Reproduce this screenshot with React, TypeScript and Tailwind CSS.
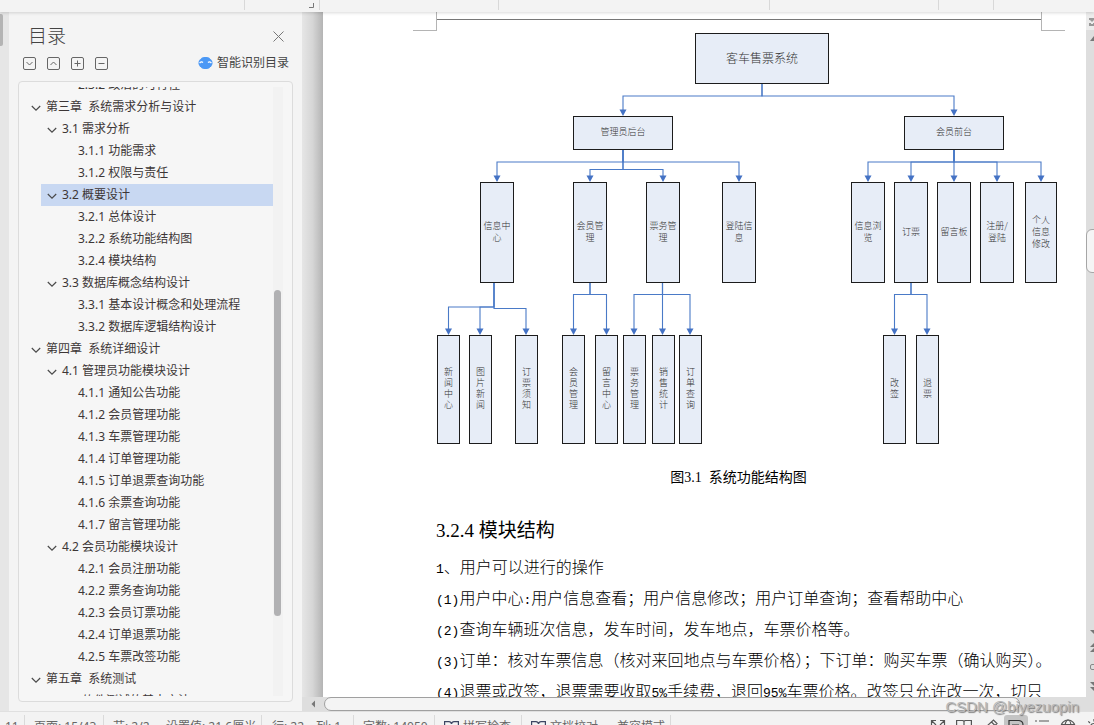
import React from "react";

type Level = 1 | 2 | 3;
type Entry = { level: Level; text: string; selected?: boolean };

const outline: Entry[] = [
  { level: 3, text: "2.3.2 政治的可行性" },
  { level: 1, text: "第三章\u00a0 系统需求分析与设计" },
  { level: 2, text: "3.1 需求分析" },
  { level: 3, text: "3.1.1 功能需求" },
  { level: 3, text: "3.1.2 权限与责任" },
  { level: 2, text: "3.2 概要设计", selected: true },
  { level: 3, text: "3.2.1 总体设计" },
  { level: 3, text: "3.2.2 系统功能结构图" },
  { level: 3, text: "3.2.4 模块结构" },
  { level: 2, text: "3.3 数据库概念结构设计" },
  { level: 3, text: "3.3.1 基本设计概念和处理流程" },
  { level: 3, text: "3.3.2 数据库逻辑结构设计" },
  { level: 1, text: "第四章\u00a0 系统详细设计" },
  { level: 2, text: "4.1 管理员功能模块设计" },
  { level: 3, text: "4.1.1 通知公告功能" },
  { level: 3, text: "4.1.2 会员管理功能" },
  { level: 3, text: "4.1.3 车票管理功能" },
  { level: 3, text: "4.1.4 订单管理功能" },
  { level: 3, text: "4.1.5 订单退票查询功能" },
  { level: 3, text: "4.1.6 余票查询功能" },
  { level: 3, text: "4.1.7 留言管理功能" },
  { level: 2, text: "4.2 会员功能模块设计" },
  { level: 3, text: "4.2.1 会员注册功能" },
  { level: 3, text: "4.2.2 票务查询功能" },
  { level: 3, text: "4.2.3 会员订票功能" },
  { level: 3, text: "4.2.4 订单退票功能" },
  { level: 3, text: "4.2.5 车票改签功能" },
  { level: 1, text: "第五章\u00a0 系统测试" },
  { level: 2, text: "5.1 软件测试的基本方法" },
];

const indent: Record<Level, string> = { 1: "ml-[6px]", 2: "ml-[22px]", 3: "ml-[38px]" };

const UI_FONT = "font-['Noto_Sans','Noto_Sans_CJK_SC',sans-serif]";
const SERIF_FONT = "font-['Liberation_Serif','Noto_Sans_CJK_SC',serif]";

function OutlineRow({ entry }: { entry: Entry }) {
  return (
    <li className={indent[entry.level]}>
      <button
        className={`flex h-[22px] w-full items-center gap-[5px] pl-[6px] text-left text-xs whitespace-nowrap text-[#3d3636] ${
          entry.selected ? "bg-[#c8d8f2]" : ""
        }`}
      >
        <svg className="mt-[2px] h-[10px] w-[10px] shrink-0" viewBox="0 0 10 10" fill="none" aria-hidden="true">
          {entry.level < 3 && <path d="M0.8 3 L5 7.2 L9.2 3" stroke="#4a4a4a" strokeWidth="1.2" />}
        </svg>
        {entry.text}
      </button>
    </li>
  );
}

function BoxIcon({ label, d }: { label: string; d: string }) {
  return (
    <button aria-label={label} className="h-[13px] w-[13px]">
      <svg viewBox="0 0 13 13" fill="none" stroke="#666" className="h-[13px] w-[13px]">
        <rect x="0.5" y="0.5" width="12" height="12" rx="1.5" />
        <path d={d} />
      </svg>
    </button>
  );
}

function Sidebar() {
  return (
    <aside className={`flex w-[293px] shrink-0 flex-col bg-[#f4f4f4] pr-[9px] pl-[9px] ${UI_FONT}`}>
      <div className="mt-[10px] flex h-7 items-center justify-between pr-[9px] pl-[10px]">
        <h2 className="text-[19px] leading-7 font-light text-[#444]">目录</h2>
        <button aria-label="关闭">
          <svg viewBox="0 0 11 11" className="h-[11px] w-[11px]" stroke="#777" fill="none">
            <path d="M0.5 0.5 L10.5 10.5 M10.5 0.5 L0.5 10.5" />
          </svg>
        </button>
      </div>
      <div className="mt-[3px] flex h-5 items-center justify-between pr-1 pl-[5px]">
        <div className="flex gap-[11px]">
          <BoxIcon label="展开" d="M3.5 5 L6.5 8 L9.5 5" />
          <BoxIcon label="收起" d="M3.5 8 L6.5 5 L9.5 8" />
          <BoxIcon label="增加级别" d="M3.5 6.5 H9.5 M6.5 3.5 V9.5" />
          <BoxIcon label="减少级别" d="M3.5 6.5 H9.5" />
        </div>
        <button className="flex items-center gap-1 text-xs text-[#444]">
          <svg viewBox="0 0 15 12" className="h-3 w-[15px]" aria-hidden="true">
            <rect x="2.5" y="0" width="10" height="12" rx="4" fill="#4b98f5" />
            <rect x="0.5" y="1.6" width="14" height="8.8" rx="4.2" fill="#4b98f5" />
            <path d="M1.6 6.2 Q3.2 4 5 5.6 M10 5.6 Q11.800 4 13.4 6.2" fill="none" stroke="#fff" strokeWidth="1.3" />
          </svg>
          智能识别目录
        </button>
      </div>
      <nav
        aria-label="目录"
        className="mt-2 mb-[9px] flex min-h-0 flex-1 rounded-[4px] border border-[#dcdcdc] bg-[#f6f6f6] py-[5px] pr-[9px]"
      >
        <div className="min-w-0 flex-1 overflow-hidden">
          <ul className="-mt-[13px]">
            {outline.map((e) => (
              <OutlineRow key={e.text} entry={e} />
            ))}
          </ul>
        </div>
        <div className="flex w-[10px] flex-col bg-[#f2f2f2] pl-px">
          <div className="h-1/3" />
          <div className="h-[53.5%] w-[7px] rounded-full bg-[#b1b1b3]" />
        </div>
      </nav>
    </aside>
  );
}

/* Diagram coordinates share one canvas whose origin is (436, 31). */
const OX = 436;
const OY = 31;

type Kind = "root" | "mid" | "leaf";
type Node = { x: number; y: number; w: number; h: number; text: string; kind: Kind };
const mid = (x: number, text: string, w = 34): Node => ({ x, y: 182, w, h: 101, text, kind: "mid" });
const leaf = (x: number, text: string): Node => ({
  x,
  y: 335,
  w: 23,
  h: 109,
  text: text.split("").join("\n"),
  kind: "leaf",
});

const nodeText: Record<Kind, string> = {
  root: "pb-[2px] text-xs",
  mid: "pb-[2px] text-[9px] leading-[12px]",
  leaf: "pb-1 text-[9px] leading-[11px]",
};

const nodes: Node[] = [
  { x: 695, y: 33, w: 134, h: 51, text: "客车售票系统", kind: "root" },
  { x: 573, y: 116, w: 100, h: 34, text: "管理员后台", kind: "mid" },
  { x: 904, y: 116, w: 100, h: 34, text: "会员前台", kind: "mid" },
  mid(480, "信息中\n心"),
  mid(573, "会员管\n理"),
  mid(646, "票务管\n理"),
  mid(722, "登陆信\n息"),
  mid(851, "信息浏\n览"),
  mid(894, "订票"),
  mid(937, "留言板"),
  mid(980, "注册/\n登陆"),
  mid(1025, "个人\n信息\n修改", 32),
  leaf(437, "新闻中心"),
  leaf(469, "图片新闻"),
  leaf(515, "订票须知"),
  leaf(562, "会员管理"),
  leaf(595, "留言中心"),
  leaf(623, "票务管理"),
  leaf(652, "销售统计"),
  leaf(679, "订单查询"),
  leaf(883, "改签"),
  leaf(916, "退票"),
];

type Edge = [fromX: number, fromY: number, bendY: number, toX: number, toY: number];
const edges: Edge[] = [
  [762, 84, 96, 623, 116],
  [762, 84, 96, 954, 116],
  [623, 150, 162, 497, 182],
  [623, 150, 162, 739, 182],
  [623, 150, 169.5, 590, 182],
  [623, 150, 169.5, 663, 182],
  [954, 150, 162, 868, 182],
  [954, 150, 162, 911, 182],
  [954, 150, 162, 954, 182],
  [954, 150, 162, 997, 182],
  [954, 150, 162, 1041, 182],
  [494, 283, 307, 448.5, 335],
  [494, 283, 307, 480, 335],
  [494, 283, 308.5, 526, 335],
  [590, 283, 294.5, 573.5, 335],
  [590, 283, 294.5, 606.5, 335],
  [662.5, 283, 294.5, 634, 335],
  [662.5, 283, 294.5, 662.5, 335],
  [662.5, 283, 294.5, 690, 335],
  [911, 283, 294.5, 894.5, 335],
  [911, 283, 294.5, 927, 335],
];

function Diagram() {
  return (
    <div className="relative -mr-4 h-[415px]">
      <svg
        className="absolute top-0 left-0 h-[415px] w-[621px]"
        viewBox={`${OX} ${OY} 621 415`}
        fill="none"
        aria-hidden="true"
      >
        {edges.map(([fx, fy, by, tx, ty], i) => (
          <g key={i}>
            <path d={`M${fx} ${fy} V${by} H${tx} V${ty - 5}`} stroke="#4a7ac7" strokeWidth="1.1" />
            <path d={`M${tx - 3.5} ${ty - 6.5} h7 L${tx} ${ty}Z`} fill="#4472c4" />
          </g>
        ))}
      </svg>
      {nodes.map((n, i) => (
        <div
          key={i}
          className={`absolute flex items-center justify-center border border-[#1c1c1c] bg-[#e7edf7] text-center font-['Noto_Sans_CJK_SC',sans-serif] font-light whitespace-pre text-[#333] ${nodeText[n.kind]}`}
          style={{ left: n.x - OX, top: n.y - OY, width: n.w, height: n.h }}
        >
          {n.text}
        </div>
      ))}
    </div>
  );
}

/* Half-width runs are set in a fixed-pitch face, half the width of a Chinese character. */
function Para({ children }: { children: string }) {
  return (
    <p className="font-['Noto_Sans_CJK_SC',sans-serif] text-base leading-[31px] font-light whitespace-nowrap text-black">
      {children.split(/([\x21-\x7e]+)/).map((part, i) =>
        i % 2 ? (
          <span key={i} className="font-['Liberation_Mono',monospace] text-[13px] leading-none">
            {part}
          </span>
        ) : (
          part
        ),
      )}
    </p>
  );
}

function DocumentPage() {
  return (
    <main className="min-w-0 flex-1 overflow-hidden bg-white">
      <div className="flex h-[19px] pr-[21px] pl-[90px]">
        <div className="w-6 shrink-0 border-r border-b border-[#b4b4b4]" />
        <div className="h-2 flex-1 border-b border-[#777]" />
        <div className="w-6 shrink-0 border-b border-l border-[#b4b4b4]" />
      </div>
      <article className="pr-[45px] pl-[113px]">
        <Diagram />
        <p className={`mt-4 text-center text-sm leading-[31px] text-black ${SERIF_FONT}`}>
          图3.1{"\u00a0 "}系统功能结构图
        </p>
        <h3 className={`mt-[22px] text-[19px] leading-[31px] font-normal text-black ${SERIF_FONT}`}>3.2.4 模块结构</h3>
        <div className="mt-[5px]">
          <Para>1、用户可以进行的操作</Para>
          <Para>(1)用户中心:用户信息查看；用户信息修改；用户订单查询；查看帮助中心</Para>
          <Para>(2)查询车辆班次信息，发车时间，发车地点，车票价格等。</Para>
          <Para>(3)订单：核对车票信息（核对来回地点与车票价格）；下订单：购买车票（确认购买）。</Para>
          <Para>(4)退票或改签，退票需要收取5%手续费，退回95%车票价格。改签只允许改一次，切只</Para>
        </div>
      </article>
    </main>
  );
}

function VerticalScrollbar() {
  return (
    <div className="flex w-2 shrink-0 flex-col overflow-hidden bg-[#dedede]">
      <div className="h-[18px] shrink-0 bg-[#ececec] pt-[6px] pl-[3px]">
        <svg viewBox="0 0 8 8" className="h-2 w-2" fill="#999">
          <path d="M0 0 H8 V2 H5 L3 4 L1 2 H0Z M0 5 H2 V6 H4 V5 H8 V8 H0Z" />
        </svg>
      </div>
      <svg viewBox="0 0 8 5" className="mt-[6px] ml-1 h-[5px] w-2 shrink-0" fill="#777">
        <path d="M0 5 L4 0 L8 5Z" />
      </svg>
      <div className="h-[188px] shrink-0" />
      <div className="h-11 w-4 shrink-0 rounded-[6px] border border-[#a6a6a6] bg-[#f5f5f5]" />
      <div className="flex-1" />
      <svg viewBox="0 0 8 64" className="mb-[6px] ml-1 h-16 w-2 shrink-0" fill="#777">
        <path d="M0 3 H8 L4 7Z M0 20 L4 16 L8 20Z M0 25 L4 21 L8 25Z M0 55 H8 L4 59Z M0 60 H8 L4 64Z" />
        <rect x="0.5" y="37.5" width="8" height="5" rx="1.5" fill="none" stroke="#888" />
      </svg>
    </div>
  );
}

function HorizontalScrollbar() {
  return (
    <div className="flex h-[14px] shrink-0 bg-[#dedede]">
      <svg viewBox="0 0 22 14" className="h-[14px] w-[22px] shrink-0" fill="#777">
        <path d="M13 3.500 V10.500 L9.500 7Z" />
      </svg>
      <div className="flex-1 rounded-[7px] border border-[#a0a0a0] bg-[#f4f4f4]" />
      <div className="w-[74px] shrink-0" />
    </div>
  );
}

const Divider = () => <span className="h-6 w-px shrink-0 bg-[#dadada]" />;

function BookIcon({ mark }: { mark: string }) {
  return (
    <svg viewBox="0 0 15 13" className="h-[13px] w-[15px] shrink-0" fill="none" stroke="#3d4663" aria-hidden="true">
      <path d="M5 0.6 H0.6 V12 H14.4 V0.6 H10 M5 0.6 Q7 0.6 7.5 3 Q8 0.6 10 0.6" strokeWidth="1.2" />
      <path d={mark} />
    </svg>
  );
}

function ViewButton({ label, active, children }: { label: string; active?: boolean; children: React.ReactNode }) {
  return (
    <button
      aria-label={label}
      aria-pressed={!!active}
      className={`flex h-6 w-6 shrink-0 items-center justify-center rounded-[3px] ${active ? "bg-[#c4c4c4]" : ""}`}
    >
      <svg viewBox="0 0 16 16" className="h-4 w-4" fill="none" stroke="#555" strokeWidth="1.2">
        {children}
      </svg>
    </button>
  );
}

function StatusBar() {
  return (
    <footer className="h-[14px] shrink-0 overflow-hidden border-t border-[#e0e0e0] bg-[#f3f3f3]">
      <div className={`flex h-[30px] items-center text-xs whitespace-nowrap text-[#666] ${UI_FONT}`}>
        <span className="w-6 shrink-0 pl-[5px]">11</span>
        <Divider />
        <span className="w-[78px] shrink-0 pl-[9px]">页面: 15/43</span>
        <Divider />
        <span className="w-[53px] shrink-0 pl-[9px]">节: 2/2</span>
        <span className="w-[104px] shrink-0 pl-[9px]">设置值: 21.6厘米</span>
        <Divider />
        <span className="w-[45px] shrink-0 pl-[10px]">行: 22</span>
        <span className="w-[46px] shrink-0 pl-[9px]">列: 1</span>
        <Divider />
        <span className="w-20 shrink-0 pl-[9px]">字数: 14050</span>
        <Divider />
        <button className="flex w-[86px] shrink-0 items-center gap-1 pl-[9px]">
          <BookIcon mark="M5 7 L7 9 L10.500 4.500" />
          拼写检查
        </button>
        <Divider />
        <button className="flex w-[86px] shrink-0 items-center gap-1 pl-[9px]">
          <BookIcon mark="M5.500 4.500 L9.500 8.500 M9.500 4.500 L5.500 8.500" />
          文档校对
        </button>
        <span className="w-[62px] shrink-0 pl-[9px]">兼容模式</span>
        <Divider />
        <div className="flex-1" />
        <div className="-mr-3 flex shrink-0 gap-[2px]">
          <ViewButton label="全屏">
            <path d="M1.500 6 V1.500 H6 M1.500 1.500 L6 6 M10 1.500 H14.500 V6 M14.500 1.500 L10 6 M1.500 10 V14.500 H6 M14.500 10 V14.500 H10 M6 10 L1.500 14.500 M10 10 L14.500 14.500" />
          </ViewButton>
          <ViewButton label="阅读视图">
            <path d="M8 2 V13 M7 1.500 H0.600 V13 H15.400 V1.500 H9 L8 2.500Z" />
          </ViewButton>
          <ViewButton label="写作模式">
            <path d="M2 14 L4.500 7.500 L11.500 1 L15 4.500 L8.500 11.500Z M9.500 3 L13 6.500" />
          </ViewButton>
          <ViewButton label="页面视图" active>
            <path d="M1 1.500 H11 Q15 2 15 6 V14.500 H1Z M4 6 H11 M4 9 H11" stroke="#333" />
          </ViewButton>
          <ViewButton label="大纲视图">
            <path d="M1 2 H3 M5 2 H15 M4 7 H6 M8 7 H15 M4 12 H6 M8 12 H15" />
          </ViewButton>
          <ViewButton label="Web 版式">
            <circle cx="8" cy="8" r="7" />
            <ellipse cx="8" cy="8" rx="3" ry="7" />
            <path d="M1.500 5.500 H14.500 M1.500 10.500 H14.500" />
          </ViewButton>
          <ViewButton label="护眼模式">
            <circle cx="8" cy="8" r="3.500" />
            <path d="M8 0 V2.500 M2.300 2.300 L4 4 M13.700 2.300 L12 4 M0 8 H2.500 M13.500 8 H16" />
          </ViewButton>
        </div>
      </div>
    </footer>
  );
}

function RibbonEdge() {
  return (
    <header className="relative z-10 flex h-3 shrink-0 bg-[#f3f3f3] pb-[2px] shadow-[0_1px_3px_rgba(0,0,0,0.15)]">
      <div className="w-[245px] shrink-0 border-r border-[#d8d8d8]" />
      <div className="flex w-[75px] shrink-0 justify-end border-r border-[#d8d8d8] pt-[3px] pr-[5px]">
        <svg viewBox="0 0 5 5" className="h-[5px] w-[5px]" fill="none" stroke="#777">
          <path d="M4.500 0 V4.500 H0" />
        </svg>
      </div>
      <div className="w-[179px] shrink-0 border-r border-[#d8d8d8]" />
      <div className="w-[271px] shrink-0 border-r border-[#d8d8d8]" />
      <div className="w-[169px] shrink-0 border-r border-[#d8d8d8]" />
      <div className="w-[55px] shrink-0 border-r border-[#d8d8d8]" />
    </header>
  );
}

export default function App() {
  return (
    <div className="relative flex h-screen flex-col overflow-hidden bg-[#f3f3f3]">
      <RibbonEdge />
      <div className="flex min-h-0 flex-1">
        <div className="w-[9px] shrink-0 bg-[#e6e6e6] pt-[2px]">
          <div className="h-8 w-[3px] rounded-r-[2px] bg-[#b4b4b4]" />
        </div>
        <Sidebar />
        <div className="flex min-w-0 flex-1 flex-col">
          <div className="flex min-h-0 flex-1">
            <div className="w-[21px] shrink-0 bg-linear-to-r from-[#e6e6e6] via-[#d6d6d6] to-[#b4b4b4]" />
            <DocumentPage />
            <VerticalScrollbar />
          </div>
          <HorizontalScrollbar />
        </div>
      </div>
      <StatusBar />
      <div className="pointer-events-none absolute right-[15px] bottom-[6px] font-['Liberation_Sans',sans-serif] text-[15px] leading-6 text-[#b8b8b8] [text-shadow:1px_1px_1px_rgba(80,80,80,0.7)]">
        CSDN @biyezuopin
      </div>
    </div>
  );
}
